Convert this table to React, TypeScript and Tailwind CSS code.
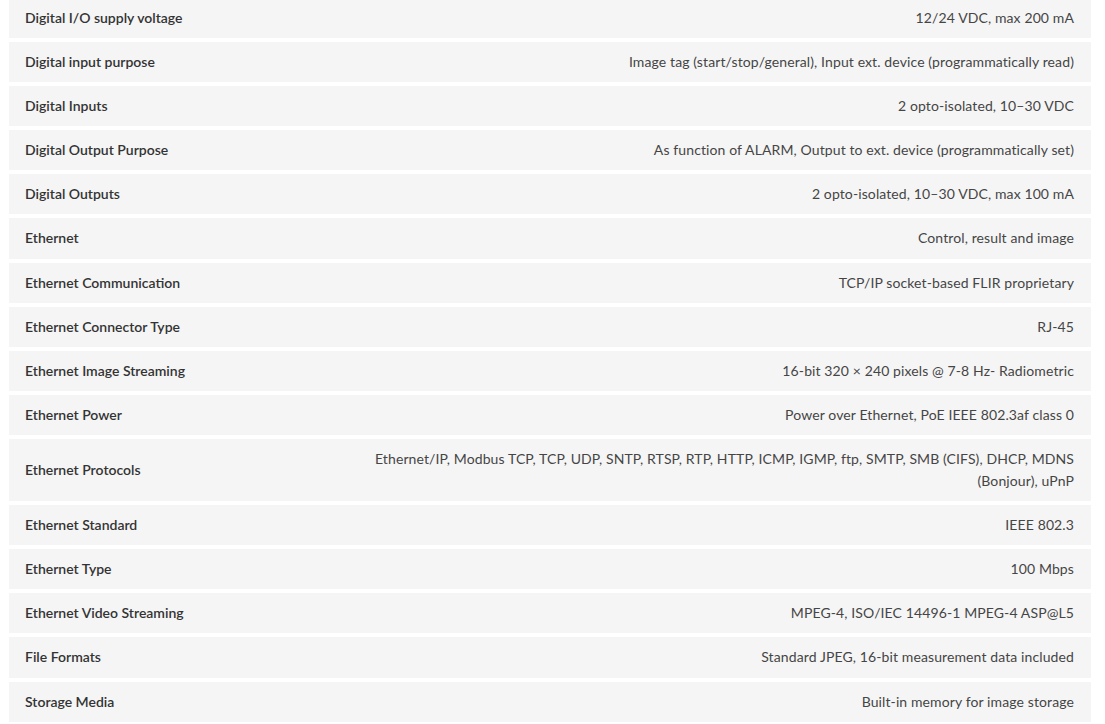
import React from "react";

const rows: [string, string][] = [
  ["Digital I/O supply voltage", "12/24 VDC, max 200 mA"],
  ["Digital input purpose", "Image tag (start/stop/general), Input ext. device (programmatically read)"],
  ["Digital Inputs", "2 opto-isolated, 10–30 VDC"],
  ["Digital Output Purpose", "As function of ALARM, Output to ext. device (programmatically set)"],
  ["Digital Outputs", "2 opto-isolated, 10–30 VDC, max 100 mA"],
  ["Ethernet", "Control, result and image"],
  ["Ethernet Communication", "TCP/IP socket-based FLIR proprietary"],
  ["Ethernet Connector Type", "RJ-45"],
  ["Ethernet Image Streaming", "16-bit 320 × 240 pixels @ 7-8 Hz- Radiometric"],
  ["Ethernet Power", "Power over Ethernet, PoE IEEE 802.3af class 0"],
  [
    "Ethernet Protocols",
    "Ethernet/IP, Modbus TCP, TCP, UDP, SNTP, RTSP, RTP, HTTP, ICMP, IGMP, ftp, SMTP, SMB (CIFS), DHCP, MDNS (Bonjour), uPnP",
  ],
  ["Ethernet Standard", "IEEE 802.3"],
  ["Ethernet Type", "100 Mbps"],
  ["Ethernet Video Streaming", "MPEG-4, ISO/IEC 14496-1 MPEG-4 ASP@L5"],
  ["File Formats", "Standard JPEG, 16-bit measurement data included"],
  ["Storage Media", "Built-in memory for image storage"],
];

export default function App() {
  return (
    <div
      className="w-[1105px] h-[724px] overflow-hidden bg-white"
      style={{ fontFamily: '"Lato", "Noto Sans", sans-serif' }}
    >
      <div className="mt-[-2px] ml-[9px] mr-[14px] flex flex-col gap-[4px]">
        {rows.map(([k, v]) => (
          <div
            key={k}
            className="flex items-center justify-between bg-[#f5f5f5] pl-[16px] pr-[17px] py-[9px] text-[14px] leading-[22.1px]"
          >
            <div className="font-semibold text-[#333333]">{k}</div>
            <div className="w-[706px] text-right tracking-[0.11px] text-[#454545]">{v}</div>
          </div>
        ))}
      </div>
    </div>
  );
}
